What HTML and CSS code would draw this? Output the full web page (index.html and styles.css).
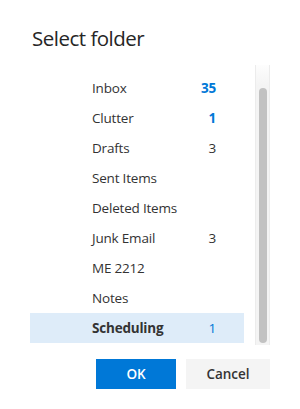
FILE: index.html
```html
<!DOCTYPE html>
<html>
<head>
<meta charset="utf-8">
<link rel="stylesheet" href="styles.css">
</head>
<body>
<div class="dialog">
  <h1 class="title">Select folder</h1>
  <div class="picker">
    <ul class="list">
      <li class="row"><span class="name">Inbox</span><span class="count unread">35</span></li>
      <li class="row"><span class="name">Clutter</span><span class="count unread">1</span></li>
      <li class="row"><span class="name">Drafts</span><span class="count">3</span></li>
      <li class="row"><span class="name">Sent Items</span></li>
      <li class="row"><span class="name">Deleted Items</span></li>
      <li class="row"><span class="name">Junk Email</span><span class="count">3</span></li>
      <li class="row"><span class="name">ME 2212</span></li>
      <li class="row"><span class="name">Notes</span></li>
      <li class="row selected"><span class="name">Scheduling</span><span class="count unread-plain">1</span></li>
    </ul>
    <div class="scrollbar"><div class="thumb"></div></div>
  </div>
  <div class="actions">
    <button class="btn primary">OK</button>
    <button class="btn secondary">Cancel</button>
  </div>
</div>
</body>
</html>
```

FILE: styles.css
```css
* { box-sizing: border-box; }
html, body { margin: 0; padding: 0; background: #fff; }
body {
  width: 300px;
  height: 409px;
  overflow: hidden;
  font-family: "Open Sans", "Noto Sans", sans-serif;
  color: #333;
}
.dialog {
  padding: 23px 30px 0 30px;
}
.title {
  margin: 0 0 0 2px;
  font-size: 20.5px;
  font-weight: 400;
  line-height: 30px;
  color: #262626;
  letter-spacing: -0.5px;
}
.picker {
  margin-top: 12px;
  display: flex;
  height: 280px;
}
.list {
  list-style: none;
  margin: 0;
  padding: 8px 0 0 0;
  width: 214px;
}
.row {
  display: flex;
  align-items: center;
  height: 30px;
  padding: 0 28px 0 62px;
  font-size: 13.5px;
  letter-spacing: -0.2px;
}
.name { flex: 1; }
.count { color: #333; }
.count.unread { color: #0078d7; font-weight: 700; }
.count.unread-plain { color: #0078d7; }
.row.selected { background: #deecf9; }
.row.selected .name { font-weight: 700; }
.scrollbar {
  margin-left: 11px;
  width: 15px;
  height: 280px;
  background: linear-gradient(to bottom, #fdfdfd, #f4f4f4 20px, #f4f4f4);
  border-left: 1px solid #ececec;
  border-right: 1px solid #ececec;
  padding: 23px 2px 2px 3px;
}
.thumb {
  width: 8px;
  height: 255px;
  border-radius: 4px;
  background: #c2c2c2;
}
.actions {
  margin-top: 14px;
  display: flex;
  gap: 10px;
  padding-left: 66px;
}
.btn {
  height: 30px;
  border: none;
  font-family: "Open Sans", "Noto Sans", sans-serif;
  font-size: 13.5px;
  font-weight: 600;
  padding: 0;
}
.primary { width: 80px; background: #0078d7; color: #fff; }
.secondary { width: 84px; background: #f4f4f4; color: #333; }
```
